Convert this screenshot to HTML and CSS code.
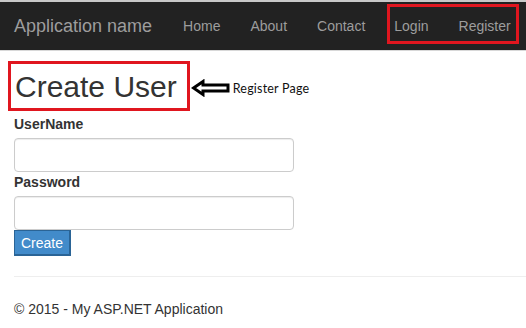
FILE: index.html
```html
<!DOCTYPE html>
<html>
<head>
<meta charset="utf-8">
<link rel="stylesheet" href="styles.css">
</head>
<body>
<div class="topline"></div>
<nav class="navbar">
  <a class="brand">Application name</a>
  <ul class="nav">
    <li>Home</li>
    <li>About</li>
    <li>Contact</li>
  </ul>
  <ul class="nav nav-right">
    <li>Login</li>
    <li>Register</li>
  </ul>
</nav>
<main class="content">
  <div class="title-row">
    <h2 class="title">Create User</h2>
    <svg class="arrow" width="40" height="18" viewBox="0 0 40 18">
      <path d="M2.5 9 L12 2.5 L12 6 L37 6 L37 12 L12 12 L12 15.5 Z" fill="none" stroke="#000" stroke-width="3" stroke-linejoin="miter"/>
    </svg>
    <span class="note">Register Page</span>
  </div>
  <form class="form">
    <label class="label">UserName</label>
    <input class="input" type="text">
    <label class="label label-2">Password</label>
    <input class="input" type="password">
    <button class="btn" type="button">Create</button>
  </form>
  <hr class="rule">
  <footer class="footer">© 2015 - My ASP.NET Application</footer>
</main>
</body>
</html>
```
FILE: styles.css
```css
* { box-sizing: border-box; }
body {
  margin: 0;
  font-family: "Liberation Sans", Arial, sans-serif;
  font-size: 14px;
  color: #333;
  background: #fff;
}
.topline { height: 2px; background: #c8c8c8; }
.navbar {
  height: 49px;
  background: #222;
  border-bottom: 1px solid #d8d8d8;
  display: flex;
  align-items: center;
  padding-left: 14px;
}
.brand {
  font-size: 18px;
  color: #9d9d9d;
  margin-right: 16px;
}
.nav {
  list-style: none;
  margin: 0;
  padding: 0;
  display: flex;
  align-items: center;
}
.nav li {
  color: #9d9d9d;
  padding: 0 15px;
  line-height: 20px;
}
.nav-right {
  align-self: flex-start;
  margin: 2px 0 0 7px;
  border: 3px solid #e0161f;
  height: 40px;
  padding: 3px 1px 0 0;
}
.nav-right li { padding: 0 4px 0 4px; }
.nav-right li + li { margin-left: 22px; }
.content { padding: 0 0 0 14px; }
.title-row {
  display: flex;
  align-items: center;
  margin-top: 10px;
  margin-left: -6px;
}
.title {
  margin: 0;
  font-size: 30px;
  font-weight: 400;
  line-height: 33px;
  border: 3px solid #e0161f;
  padding: 6px 10px 5px 4px;
  color: #333;
}
.arrow { margin-left: 1px; margin-top: 3px; }
.note {
  font-family: "Lato", "Open Sans", sans-serif;
  font-size: 12.5px;
  color: #111;
  margin-left: 2px;
  margin-top: 4px;
  letter-spacing: 0.2px;
}
.form { display: flex; flex-direction: column; align-items: flex-start; margin-top: 3px; }
.label {
  font-weight: 700;
  line-height: 20px;
  margin-bottom: 4px;
}
.input {
  width: 280px;
  height: 34px;
  border: 1px solid #ccc;
  border-radius: 4px;
  box-shadow: inset 0 1px 1px rgba(0,0,0,0.075);
  margin: 0;
}
.btn {
  font-family: "Liberation Sans", Arial, sans-serif;
  font-size: 14px;
  background: #428bca;
  color: #fff;
  border: 1px solid #2a6496;
  border-width: 1px 2px 2px 1px;
  padding: 0 5px;
  height: 26px;
  width: 57px;
  margin: 0;
}
.rule {
  border: 0;
  border-top: 1px solid #eee;
  margin: 20px 0 0 0;
}
.footer {
  margin-top: 22px;
  line-height: 20px;
}
```
